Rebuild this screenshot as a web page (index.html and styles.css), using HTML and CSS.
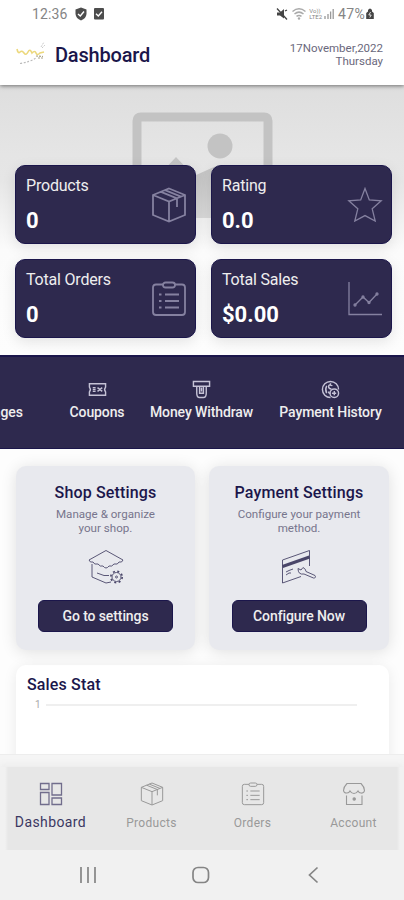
FILE: index.html
```html
<!DOCTYPE html>
<html lang="en">
<head>
    <meta charset="UTF-8">
    <meta name="viewport" content="width=device-width, initial-scale=1.0">
    <title>Dashboard</title>
    <link rel="stylesheet" href="styles.css">
</head>
<body>
    <!-- shared icons -->
    <svg class="symbols" width="0" height="0">
        <symbol id="box" viewBox="0 0 36 36">
            <path d="M18 1.5 L34 8 V28 L18 34.5 L2 28 V8 Z M2 8 L18 14.5 L34 8 M18 14.5 V34.5 M10 4.8 L26 11.3 V20 M14 3.2 L30 9.7"/>
        </symbol>
        <symbol id="clipboard" viewBox="0 0 36 36">
            <path d="M12 3.5 H5 Q2 3.5 2 6.5 V31 Q2 34 5 34 H31 Q34 34 34 31 V6.5 Q34 3.5 31 3.5 H24"/>
            <rect x="12" y="1.5" width="12" height="5" rx="2.5"/>
            <path d="M8 13.5 H10.5 M14 13.5 H28 M8 20 H10.5 M14 20 H28 M8 26.5 H10.5 M14 26.5 H28"/>
        </symbol>
    </svg>

    <div class="status-bar">
        <div class="status-left">
            <span>12:36</span>
            <svg width="12" height="14" viewBox="0 0 12 14"><path d="M6 .5 L11.5 2.5 V7 Q11 11.5 6 13.5 Q1 11.5 .5 7 V2.5 Z" fill="#4d4d4d"/><path d="M3 7 L5.3 9 L9 4.5" fill="none" stroke="#fff" stroke-width="1.4"/></svg>
            <svg class="check" width="10" height="12" viewBox="0 0 10 12"><rect width="10" height="11.5" rx="1" fill="#4d4d4d"/><path d="M2 5.8 L4.3 8 L8 3.8" fill="none" stroke="#fff" stroke-width="1.4"/></svg>
        </div>
        <div class="status-right">
            <svg class="mute" width="12" height="12" viewBox="0 0 12 12"><path d="M1 4.5 H4 L8 1 V10.5 L4 7.5 H1 Z" fill="#444"/><path d="M1 .5 L11 11.5 M9 3 L11 2" stroke="#444" stroke-width="1.3"/></svg>
            <svg class="wifi" width="14" height="12" viewBox="0 0 14 12"><path d="M.5 3.5 Q7 -1.8 13.5 3.5 M2.5 6 Q7 2.3 11.5 6 M4.5 8.4 Q7 6.5 9.5 8.4" fill="none" stroke="#aaa" stroke-width="1.5"/><circle cx="7" cy="10.5" r="1.2" fill="#aaa"/></svg>
            <span class="volte">Vo))<br>LTE2</span>
            <svg class="signal" width="10" height="11" viewBox="0 0 10 11"><path d="M1 11 V8 M4 11 V6 M6.6 11 V3.5 M9.2 11 V1" stroke="#999" stroke-width="1.3"/></svg>
            <span class="percent">47%</span>
            <svg width="8" height="11" viewBox="0 0 8 11"><path d="M2 3.5 V2 Q4 -1 6 2 V3.5 L7.8 5 V11 H.2 V5 Z" fill="#444"/><path d="M4.6 4 L2.8 7 H5.2 L3.8 9.5" stroke="#fff" stroke-width=".8" fill="none"/></svg>
        </div>
    </div>

    <header class="header">
        <div class="brand">
            <svg width="30" height="26" viewBox="0 0 30 26" fill="none">
                <path d="M1 7 Q2 12 4 10 T8 11 T12 10 T16 11 Q19 8 20 11 T24 11 L28 10" stroke="#ecd87c" stroke-width="1.6"/>
                <path d="M4 21.5 Q14 20 20 16" stroke="#bbb" stroke-width="1.1" stroke-dasharray="2 1.6"/>
                <path d="M20 14 L27 14.5 M22 16 H27" stroke="#aaa48a" stroke-width="1.2" stroke-dasharray="2 1"/>
                <path d="M25 5 L28 0 M26 6 L29 3" stroke="#bbb" stroke-width=".8" stroke-dasharray="2 1"/>
            </svg>
            <h1>Dashboard</h1>
        </div>
        <div class="date">17November,2022<br>Thursday</div>
    </header>

    <main class="content">
        <section class="hero">
            <svg class="placeholder" width="142" height="120" viewBox="0 0 142 120">
                <defs>
                    <linearGradient id="fade" x1="0" y1="0" x2="0" y2="120" gradientUnits="userSpaceOnUse">
                        <stop offset="0" stop-color="#c3c3c3"/>
                        <stop offset=".5" stop-color="#c5c5c5"/>
                        <stop offset=".9" stop-color="#dadada"/>
                    </linearGradient>
                </defs>
                <path d="M5 105 V9 Q5 5 9 5 H132 Q136 5 136 9 V105" fill="none" stroke="#c3c3c3" stroke-width="9"/>
                <circle cx="88" cy="34" r="12.5" fill="#c3c3c3"/>
                <path d="M16 75 L44 45 L62 64 L84 54 L118 106 H16 Z" fill="url(#fade)"/>
            </svg>
            <div class="stats">
                <div class="stat">
                    <div>
                        <div class="stat-name">Products</div>
                        <div class="stat-value">0</div>
                    </div>
                    <svg class="icon"><use href="#box"/></svg>
                </div>
                <div class="stat">
                    <div>
                        <div class="stat-name">Rating</div>
                        <div class="stat-value">0.0</div>
                    </div>
                    <svg class="icon thin" viewBox="0 0 36 36"><path d="M18 1.5 L22.3 12.9 L34.2 13.8 L25.2 21.8 L28.2 34 L18 28.6 L7.8 34 L10.8 21.8 L1.8 13.8 L13.7 12.9 Z"/></svg>
                </div>
                <div class="stat">
                    <div>
                        <div class="stat-name">Total Orders</div>
                        <div class="stat-value">0</div>
                    </div>
                    <svg class="icon"><use href="#clipboard"/></svg>
                </div>
                <div class="stat">
                    <div>
                        <div class="stat-name">Total Sales</div>
                        <div class="stat-value">$0.00</div>
                    </div>
                    <svg class="icon thin" viewBox="0 0 36 36"><path d="M2 1 V33.5 H35 M8 24 L16 16 L22 21.5 L30 13"/><circle cx="8" cy="24" r="1"/><circle cx="16" cy="16" r="1"/><circle cx="22" cy="21.5" r="1"/><circle cx="30" cy="13" r="1"/></svg>
                </div>
            </div>
        </section>

        <nav class="shortcuts">
            <a class="shortcut messages"><span class="glyph"></span>Messages</a>
            <a class="shortcut coupons">
                <svg class="glyph" viewBox="0 0 20 20"><path d="M1.5 4 H18.5 V7.5 Q16.5 10 18.5 12.5 V16 H1.5 V12.5 Q3.5 10 1.5 7.5 Z M5 8 H8 M5 10 H8 M5 12 H8 M10 8 L15 12 M15 8 L10 12"/></svg>
                Coupons
            </a>
            <a class="shortcut withdraw">
                <svg class="glyph" viewBox="0 0 20 20"><path d="M1.5 1.5 H18.5 V6.5 H1.5 Z M5 6.5 V14 Q5 18.5 8 18.5 H12 Q15 18.5 15 14 V6.5 M8 7 V14 H12 V7 M10 8 V12"/></svg>
                Money Withdraw
            </a>
            <a class="shortcut history">
                <svg class="glyph" viewBox="0 0 20 20"><path d="M10 18.5 A8.5 8.5 0 1 1 18.5 10 M12 6 Q8 4 8 7 Q8 9 11 9.5 M10 3.5 V6 M6 14 Q4 10 6 6 M8 12 Q8 14 10 14"/><circle cx="14" cy="14" r="4.5"/><path d="M11.5 14 H16 M14 11.5 V16"/></svg>
                Payment History
            </a>
        </nav>

        <section class="settings">
            <div class="setting-card">
                <h2>Shop Settings</h2>
                <p>Manage &amp; organize<br>your shop.</p>
                <svg class="picture" width="36" height="36" viewBox="0 0 36 36">
                    <path d="M1 11 L18 1.5 L35 11 Q34 14 31 13 Q30 16 26 15 Q24 18 21 17 Q18 21 15 17 Q12 18 10 15 Q6 16 5 13 Q2 14 1 11 Z M4 15 V28 L18 34 L23 33 M9 24 L16 26.5 H21"/>
                    <circle cx="28.5" cy="28" r="4.5"/>
                    <circle cx="28.5" cy="28" r="5.7" stroke-width="1.6" stroke-dasharray="2 2.5"/>
                    <circle cx="28.5" cy="28" r="1"/>
                </svg>
                <button class="button">Go to settings</button>
            </div>
            <div class="setting-card">
                <h2>Payment Settings</h2>
                <p>Configure your payment<br>method.</p>
                <svg class="picture" width="36" height="36" viewBox="0 0 36 36">
                    <path d="M1.5 11 L28.5 1.5 V17 M1.5 11 V34 L20 27.5 M5 23 L8 21.5 L12 20 M5 26 L8 24 L10 24"/>
                    <path d="M1.5 17.5 L28.5 8" stroke-width="3"/>
                    <path d="M17 19.5 L20 21 L22 18.5 Q25 20 25 22.5 L34 26.5 Q35.5 29 32.5 29 L23 25 Q17 26 17 19.5 Z"/>
                </svg>
                <button class="button">Configure Now</button>
            </div>
        </section>

        <section class="sales">
            <h2>Sales Stat</h2>
            <div class="axis"><span>1</span><div class="axis-line"></div></div>
        </section>
    </main>

    <footer class="tab-bar">
        <div class="tabs">
            <a class="tab active">
                <svg class="tab-icon" viewBox="0 0 24 24"><path d="M1.5 1.5 H10 V7.5 H1.5 Z M13 1.5 H22.5 V13 H13 Z M1.5 10.5 H10 V22.5 H1.5 Z M13 16 H22.5 V22.5 H13 Z"/></svg>
                Dashboard
            </a>
            <a class="tab"><svg class="tab-icon shared"><use href="#box"/></svg>Products</a>
            <a class="tab"><svg class="tab-icon shared"><use href="#clipboard"/></svg>Orders</a>
            <a class="tab">
                <svg class="tab-icon" viewBox="0 0 24 24"><path d="M5 1.5 H19 Q22.5 5 22.5 8.5 Q22 11.5 19 11 Q17 11 16 9 Q14.5 11.5 12 11.5 Q9.5 11.5 8 9 Q7 11 5 11 Q2 11.5 1.5 8.5 Q1.5 5 5 1.5 Z M4.5 13.5 V22.5 H20 V13.5"/><circle cx="12.2" cy="17" r="1.2" fill="#999"/></svg>
                Account
            </a>
        </div>
    </footer>

    <div class="system-nav">
        <svg width="18" height="18" viewBox="0 0 18 18"><path d="M2 1 V17 M9 1 V17 M16 1 V17"/></svg>
        <svg width="18" height="18" viewBox="0 0 18 18"><rect x="1" y="1.5" width="15.5" height="15" rx="5"/></svg>
        <svg width="18" height="18" viewBox="0 0 18 18"><path d="M12.5 1.5 L4.5 9 L12.5 16.5"/></svg>
    </div>
</body>
</html>
```

FILE: styles.css
```css
:root {
    --primary: #2e294e;
    --edge: #1b164b;
    --muted: #999;
}

* {
    box-sizing: border-box;
}

body {
    margin: 0;
    height: 900px;
    overflow: hidden;
    display: flex;
    flex-direction: column;
    font-family: Roboto, "Liberation Sans", sans-serif;
    color: var(--edge);
    background: #fdfdfd;
}

h1,
h2,
p {
    margin: 0;
}

svg {
    flex-shrink: 0;
}

.symbols {
    display: none;
}

.status-bar {
    position: relative;
    z-index: 2;
    flex: none;
    height: 28px;
    padding: 0 30px 1px 32px;
    display: flex;
    align-items: center;
    justify-content: space-between;
    font-size: 14px;
    color: #858585;
    background: #fff;
}

.status-left,
.status-right {
    display: flex;
    align-items: center;
}

.status-left span {
    width: 43px;
    letter-spacing: 0.1px;
}

.status-left .check {
    margin-left: 7px;
}

.mute {
    margin-right: 4px;
}

.volte {
    margin-left: 3px;
    font-size: 6px;
    line-height: 6px;
}

.signal {
    margin: 0 4px 0 2px;
}

.percent {
    margin-right: 1px;
    letter-spacing: 0.3px;
}

.header {
    position: relative;
    z-index: 1;
    flex: none;
    height: 57px;
    padding: 0 21px 3px 16px;
    display: flex;
    align-items: center;
    justify-content: space-between;
    background: #fff;
    box-shadow: 0 1px 4px rgba(0, 0, 0, 0.5);
}

.brand {
    display: flex;
    align-items: center;
    gap: 9px;
}

.brand h1 {
    font-size: 20px;
    font-weight: 500;
    line-height: 24px;
    letter-spacing: -0.2px;
}

.date {
    font-size: 11.5px;
    line-height: 13px;
    text-align: right;
    color: #6a687c;
}

.content {
    flex: none;
    height: 669px;
    overflow: hidden;
}

.hero {
    position: relative;
    height: 270px;
    padding: 80px 12px 0 15px;
    background: linear-gradient(#dedede 0, #e5e5e5 70px, #e6e6e6 95px, #fbfbfb 165px, #fdfdfd 100%);
}

.placeholder {
    position: absolute;
    left: 132px;
    top: 27px;
}

.stats {
    position: relative;
    display: grid;
    grid-template-columns: 181px 181px;
    gap: 15px;
}

.stat {
    height: 79px;
    padding: 10px 8px 0 11px;
    display: flex;
    justify-content: space-between;
    color: #fff;
    background: var(--primary);
    border: 1px solid var(--edge);
    border-radius: 10px;
    box-shadow: 0 4px 14px rgba(0, 0, 0, 0.1);
}

.stat > div {
    margin-left: -1px;
}

.stat-name {
    font-size: 16px;
    line-height: 20px;
    letter-spacing: -0.2px;
    color: #eee;
}

.stat-value {
    margin-top: 12px;
    font-size: 22px;
    font-weight: 700;
    line-height: 26px;
}

.icon {
    width: 36px;
    height: 36px;
    margin-top: 11px;
    fill: none;
    stroke: #8581a0;
    stroke-width: 1.8;
}

.icon.thin {
    stroke-width: 1.3;
}

.shortcuts {
    height: 94px;
    padding-top: 23px;
    display: flex;
    overflow: hidden;
    color: #eee;
    background: var(--primary);
    border-top: 2px solid var(--edge);
    border-bottom: 1px solid var(--edge);
}

.shortcut {
    flex: none;
    display: flex;
    flex-direction: column;
    align-items: center;
    gap: 4px;
    font-size: 14px;
    font-weight: 500;
    line-height: 18px;
    letter-spacing: -0.1px;
    white-space: nowrap;
}

.messages {
    width: 100px;
    margin-left: -59px;
}

.coupons {
    width: 112px;
}

.withdraw {
    width: 97px;
}

.history {
    width: 161px;
}

.glyph {
    width: 19px;
    height: 19px;
    fill: none;
    stroke: #c5c2d6;
    stroke-width: 1.5;
}

.settings {
    padding: 17px 15px 0 16px;
    display: grid;
    grid-template-columns: 179px 180px;
    gap: 14px;
}

.setting-card {
    height: 184px;
    padding-top: 17px;
    display: flex;
    flex-direction: column;
    align-items: center;
    text-align: center;
    background: #e8e9ee;
    border-radius: 10px;
    box-shadow: 0 2px 16px rgba(0, 0, 0, 0.12);
}

.setting-card h2,
.sales h2 {
    font-size: 16px;
    font-weight: 500;
    line-height: 20px;
    letter-spacing: 0.15px;
}

.setting-card p {
    margin-top: 4px;
    font-size: 11.6px;
    line-height: 14px;
    color: #77758c;
}

.picture {
    margin: 14px 0 15px;
    fill: none;
    stroke: #4a4669;
    stroke-width: 0.9;
}

.button {
    width: 135px;
    height: 32px;
    padding: 0;
    font-family: inherit;
    font-size: 14px;
    font-weight: 500;
    letter-spacing: -0.1px;
    color: #eee;
    background: var(--primary);
    border: 1px solid var(--edge);
    border-radius: 6px;
}

.sales {
    height: 250px;
    margin: 15px 15px 0 16px;
    padding: 10px 11px;
    background: #fff;
    border-radius: 10px;
    box-shadow: 0 2px 14px rgba(0, 0, 0, 0.08);
}

.axis {
    margin: 3px 21px 0 8px;
    display: flex;
    align-items: center;
    gap: 5px;
    font-size: 10px;
    line-height: 14px;
    color: #aaa;
}

.axis-line {
    flex: 1;
    height: 2px;
    background: #efefef;
}

.tab-bar {
    flex: none;
    height: 96px;
    padding-top: 12px;
    background: #f5f5f5;
    border-top: 1px solid #ededed;
}

.tabs {
    height: 83px;
    padding-top: 15px;
    display: grid;
    grid-template-columns: repeat(4, 1fr);
    background: linear-gradient(90deg, #f1f1f1 5px, #e7e7e7 8px, #e7e7e7 397px, #f1f1f1 400px);
    box-shadow: 0 -3px 6px #ededed;
}

.tab {
    display: flex;
    flex-direction: column;
    align-items: center;
    gap: 8px;
    font-size: 12px;
    line-height: 18px;
    letter-spacing: 0.3px;
    color: var(--muted);
}

.tab.active {
    gap: 7px;
    letter-spacing: 0.4px;
    font-size: 14px;
    color: #3b3762;
}

.tab-icon {
    width: 24px;
    height: 24px;
    fill: none;
    stroke: var(--muted);
    stroke-width: 1.1;
}

.tab-icon.shared {
    stroke-width: 1.5;
}

.active .tab-icon {
    stroke: #716d8c;
    stroke-width: 1.3;
}

.system-nav {
    flex: none;
    height: 50px;
    padding: 0 81px 0 79px;
    display: flex;
    align-items: center;
    justify-content: space-between;
    background: #f1f1f1;
}

.system-nav svg {
    fill: none;
    stroke: #858585;
    stroke-width: 1.7;
}
```
